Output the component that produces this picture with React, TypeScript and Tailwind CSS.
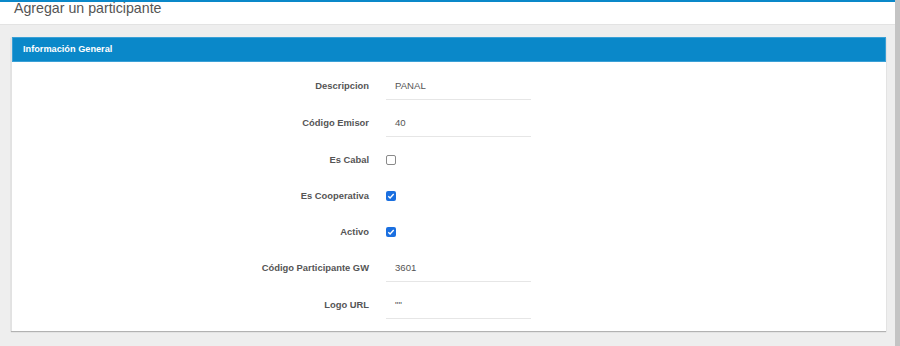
import React from "react"

type Row = { label: string; kind: "text" | "check"; value?: string; checked?: boolean }

const rows: Row[] = [
  { label: "Descripcion", kind: "text", value: "PANAL" },
  { label: "Código Emisor", kind: "text", value: "40" },
  { label: "Es Cabal", kind: "check", checked: false },
  { label: "Es Cooperativa", kind: "check", checked: true },
  { label: "Activo", kind: "check", checked: true },
  { label: "Código Participante GW", kind: "text", value: "3601" },
  { label: "Logo URL", kind: "text", value: "\"\"" },
]

function Check({ checked }: { checked?: boolean }) {
  if (!checked) {
    return <span className="block w-[10px] h-[10px] rounded-[2px] border border-[#8a8a8a] bg-white" />
  }
  return (
    <span className="flex w-[10px] h-[10px] rounded-[2px] bg-[#1a6fe0] items-center justify-center">
      <svg width="8" height="8" viewBox="0 0 8 8">
        <path d="M1.3 4.2 L3.1 5.9 L6.7 2.1" fill="none" stroke="white" strokeWidth="1.4" />
      </svg>
    </span>
  )
}

export default function App() {
  return (
    <div className="flex h-[346px] w-[900px] bg-[#eeeeee] font-['Liberation_Sans',Arial,sans-serif] overflow-hidden">
      <div className="flex-1 flex flex-col">
        <div className="h-[2px] bg-[#0a88c9]" />
        <div className="h-[23px] bg-white border-b border-[#e3e3e3] pl-[14px] flex items-start">
          <h1 className="text-[14.2px] leading-[16px] text-[#555] -mt-[2px]">Agregar un participante</h1>
        </div>
        <div className="pt-[12px] pl-[11px] pr-[9px]">
          <div className="bg-white shadow-[0_1px_1px_rgba(0,0,0,0.25)] border-l border-[#e2e2e2]">
            <div className="h-[25px] bg-[#0a88c9] border border-[#3aa0d6] flex items-center pl-[10px]">
              <span className="text-[9.2px] font-bold text-white">Información General</span>
            </div>
            <div className="pt-[6px] pb-[7px] flex flex-col">
              {rows.map((r) => (
                <div key={r.label} className={`flex items-center ${r.kind === "text" ? "h-[37px]" : "h-[36px]"}`}>
                  <div className="w-[357px] text-right text-[9.4px] font-bold text-[#555]">{r.label}</div>
                  <div className="ml-[17px]">
                    {r.kind === "text" ? (
                      <div className="w-[145px] h-[26px] border-b border-[#e6e6e6] pl-[9px] flex items-center text-[9.6px] text-[#555]">
                        {r.value}
                      </div>
                    ) : (
                      <Check checked={r.checked} />
                    )}
                  </div>
                </div>
              ))}
            </div>
          </div>
        </div>
      </div>
      <div className="w-[5px] bg-[#c4c4c4]" />
    </div>
  )
}
